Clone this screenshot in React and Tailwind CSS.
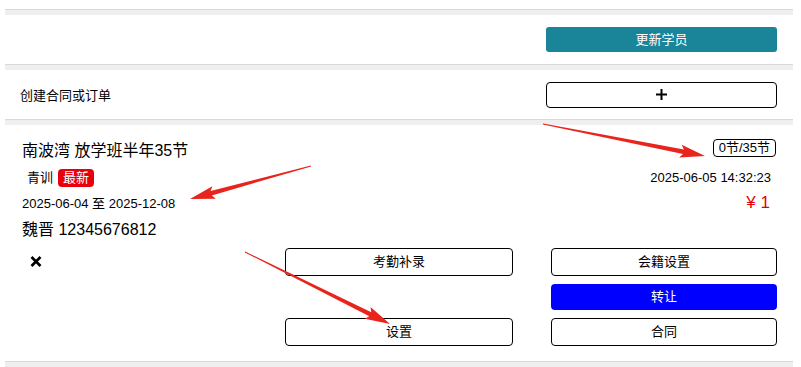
import React from 'react';

const font = { fontFamily: '"Liberation Sans", "Noto Sans CJK SC", sans-serif' };

function arrowPoints(x1, y1, x2, y2, headLen = 22, headW = 13, shaftW = 4.5) {
  const dx = x2 - x1;
  const dy = y2 - y1;
  const len = Math.hypot(dx, dy);
  const ux = dx / len;
  const uy = dy / len;
  const nx = -uy;
  const ny = ux;
  const bx = x2 - ux * headLen;
  const by = y2 - uy * headLen;
  const pts = [
    [x1 + nx * 0.4, y1 + ny * 0.4],
    [bx + nx * shaftW / 2, by + ny * shaftW / 2],
    [bx - ux * 3 + nx * headW / 2, by - uy * 3 + ny * headW / 2],
    [x2, y2],
    [bx - ux * 3 - nx * headW / 2, by - uy * 3 - ny * headW / 2],
    [bx - nx * shaftW / 2, by - ny * shaftW / 2],
    [x1 - nx * 0.4, y1 - ny * 0.4],
  ];
  return pts.map((p) => p.map((v) => v.toFixed(1)).join(',')).join(' ');
}

const arrows = [
  [543, 124, 705, 156],
  [311, 166, 190, 199],
  [245, 252, 390, 324],
];

function Strip() {
  return <div className="h-[6px] border-t border-[#d9d9d9] bg-[#efefef]" />;
}

function OutlineButton({ children }) {
  return (
    <button className="h-[28px] w-full rounded-[4px] border border-black bg-white text-[13px] text-black">
      {children}
    </button>
  );
}

export default function App() {
  return (
    <div className="relative h-[367px] w-[801px] overflow-hidden bg-white" style={font}>
      <div className="ml-[5px] mr-[8px] pt-[9px]">
        <Strip />

        {/* update student */}
        <div className="flex h-[49px] items-center justify-end pr-[16px]">
          <button className="h-[25px] w-[231px] rounded-[3px] bg-[#1a8499] text-[13px] text-white">
            更新学员
          </button>
        </div>

        <Strip />

        {/* create contract */}
        <div className="flex h-[49px] items-center justify-between pl-[15px] pr-[16px]">
          <span className="mt-[3px] text-[13px] text-black">创建合同或订单</span>
          <button className="flex h-[26px] w-[231px] items-center justify-center rounded-[4px] border border-black bg-white">
            <svg width="13" height="13" viewBox="0 0 13 13">
              <path d="M6.5 1v11M1 6.5h11" stroke="#000" strokeWidth="2" />
            </svg>
          </button>
        </div>

        <Strip />

        {/* contract card */}
        <div className="h-[236px] pl-[17px] pr-[16px] pt-[14px] text-black">
          <div className="flex h-[22px] items-start justify-between">
            <span className="text-[16px] leading-[23px]">南波湾 放学班半年35节</span>
            <span className="mr-px flex h-[18px] items-center rounded-[4px] border border-black px-[5px] text-[13px]">
              0节/35节
            </span>
          </div>

          <div className="mt-[7px] flex h-[19px] items-center justify-between">
            <div className="flex items-center pl-[5px]">
              <span className="text-[13px]">青训</span>
              <span className="ml-[5px] flex h-[18px] items-center rounded-[4px] bg-[#e8000b] px-[5px] text-[13px] text-white">
                最新
              </span>
            </div>
            <span className="mr-[6px] text-[13px]">2025-06-05 14:32:23</span>
          </div>

          <div className="mt-[7px] flex h-[18px] items-center justify-between">
            <span className="mt-px text-[13px]">2025-06-04 至 2025-12-08</span>
            <span className="mr-[7px] text-[17px] text-[#e60000]">¥ 1</span>
          </div>

          <div className="mt-[8px] flex h-[20px] items-center">
            <span className="text-[16px]">魏晋 12345676812</span>
          </div>

          <div className="mt-[8px] grid grid-cols-[225px_228px_226px] gap-x-[38px] gap-y-[8px]">
            <div className="flex h-[26px] items-center pl-[8px]">
              <svg width="12" height="11" viewBox="0 0 12 11">
                <path d="M1.5 1l9 9M10.5 1l-9 9" stroke="#000" strokeWidth="2.6" />
              </svg>
            </div>
            <OutlineButton>考勤补录</OutlineButton>
            <OutlineButton>会籍设置</OutlineButton>

            <div />
            <div />
            <button className="h-[26px] w-full rounded-[4px] bg-[#0000ff] text-[13px] text-white">转让</button>

            <div />
            <OutlineButton>设置</OutlineButton>
            <OutlineButton>合同</OutlineButton>
          </div>
        </div>

        <Strip />
      </div>

      {/* annotation arrows */}
      <svg className="pointer-events-none absolute left-0 top-0" width="801" height="367">
        {arrows.map((a, i) => (
          <polygon key={i} points={arrowPoints(...a)} fill="#e8241c" />
        ))}
      </svg>
    </div>
  );
}
